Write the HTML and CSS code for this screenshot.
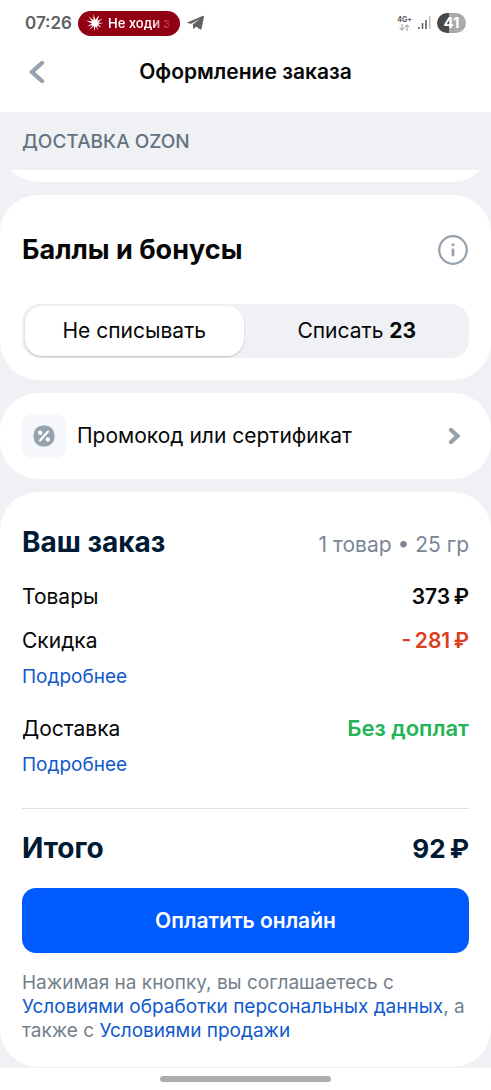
FILE: index.html
```html
<!DOCTYPE html>
<html lang="ru">
<head>
<meta charset="utf-8">
<meta name="viewport" content="width=device-width, initial-scale=1">
<title>Оформление заказа</title>
<link rel="stylesheet" href="styles.css">
</head>
<body>
<div class="status-bar">
  <span class="clock">07:26</span>
  <div class="live-pill">
    <svg width="18" height="18" viewBox="0 0 18 18" aria-hidden="true"><path fill="#fff" d="M7.300 0 9.400 5.800 13.300 1 11.300 6.800 16.500 4.800 12 8.400 17.500 9 12 10 15.500 13.500 10.900 11.500 12.200 16.500 9.600 12.200 8.300 17.500 7.900 11.800 3.500 16 6.600 10.900 .8 12.500 6 9.500 0 6.500 6.300 7.500 2.500 2.500 7.600 6.200Z"/></svg>
    <span class="live-text">Не ходи з</span>
  </div>
  <svg width="18" height="16" viewBox="0 0 18 16" aria-hidden="true"><path fill="#606060" d="M.8 7.300 15.500.900q1.700-.6 1.400 1.200l-2.300 11.400q-.4 1.600-1.800.7L9.200 11.500l-2 2.100q-.9.800-1-.5l-.4-3.700 7.200-5.600-8.700 5L.9 8.300q-1-.5-.1-1Z"/></svg>
  <div class="status-right">
    <div class="network">
      <span>4G+</span>
      <svg width="11" height="7" viewBox="0 0 11 7" aria-hidden="true"><path d="M3 0v6M.6 3.700 3 6.200l2.400-2.500M8 7V1M5.600 3.300 8 .800l2.400 2.500" fill="none" stroke="#999"/></svg>
    </div>
    <svg width="13" height="14" viewBox="0 0 13 14" aria-hidden="true"><path d="M1 11v2M4.500 7v6M8 4v9" stroke="#555" stroke-width="1.500"/><path d="M11.700 0v13" stroke="#bbb" stroke-width="1.500"/></svg>
    <span class="battery">41</span>
  </div>
</div>
<header class="nav">
  <button class="back" type="button" aria-label="Назад">
    <svg width="16" height="24" viewBox="0 0 16 24" aria-hidden="true"><path d="M13 3 3 12l10 9" fill="none" stroke="#96a2ae" stroke-width="4.300" stroke-linecap="round" stroke-linejoin="miter"/></svg>
  </button>
  <h1 class="nav-title">Оформление заказа</h1>
</header>
<main class="content">
  <div class="section-label">ДОСТАВКА OZON</div>
  <div class="scrolled-clip"><div class="scrolled-card"></div></div>

  <section class="card bonus">
    <div class="bonus-head">
      <h2 class="bonus-title">Баллы и бонусы</h2>
      <button class="info" type="button" aria-label="Информация">
        <svg width="32" height="32" viewBox="0 0 32 32" aria-hidden="true"><circle cx="16" cy="16" r="13.800" fill="none" stroke="#96a2ae" stroke-width="2.300"/><circle cx="16" cy="10.700" r="1.500" fill="#96a2ae"/><path d="M16 16v5" stroke="#96a2ae" stroke-width="2.800" stroke-linecap="round"/></svg>
      </button>
    </div>
    <div class="segmented">
      <label class="segment"><input class="segment-input" type="radio" name="points" checked><span class="segment-text">Не списывать</span></label>
      <label class="segment"><input class="segment-input" type="radio" name="points"><span class="segment-text">Списать <b>23</b></span></label>
    </div>
  </section>

  <button class="card promo" type="button">
    <span class="promo-icon">
      <svg width="22" height="22" viewBox="0 0 22 22" aria-hidden="true"><rect x=".5" y=".5" width="21" height="21" rx="9.500" fill="#96a2ae"/><path d="m7 15.500 8-9" stroke="#fff" stroke-width="2.200" stroke-linecap="round"/><circle cx="7.200" cy="7.700" r="2.200" fill="#fff"/><circle cx="14.800" cy="14.500" r="2.200" fill="#fff"/></svg>
    </span>
    <span class="promo-text">Промокод или сертификат</span>
    <svg class="chevron" width="14" height="18" viewBox="0 0 14 18" aria-hidden="true"><path d="m4 3 6.500 6L4 15" fill="none" stroke="#96a2ae" stroke-width="4.300" stroke-linecap="round" stroke-linejoin="miter"/></svg>
  </button>

  <section class="card order">
    <div class="row order-head"><h2 class="order-title">Ваш заказ</h2><span class="order-meta">1 товар • 25 гр</span></div>
    <div class="row line goods"><span>Товары</span><span class="price">373&#8201;₽</span></div>
    <div class="row line"><span>Скидка</span><span class="price discount">-&#8201;281&#8201;₽</span></div>
    <a class="more" href="#">Подробнее</a>
    <div class="row line delivery"><span>Доставка</span><span class="price free">Без доплат</span></div>
    <a class="more" href="#">Подробнее</a>
    <div class="row total"><span class="total-label">Итого</span><span>92&#8201;₽</span></div>
    <button class="pay" type="button">Оплатить онлайн</button>
    <p class="legal">Нажимая на кнопку, вы соглашаетесь с <a href="#">Условиями обработки персональных данных</a>, а также с <a href="#">Условиями продажи</a></p>
  </section>
</main>
<div class="home-area"><div class="home-bar"></div></div>
</body>
</html>
```
FILE: styles.css
```css
* { box-sizing: border-box; }
body {
  margin: 0;
  background: #fff;
  color: #070707;
  font-family: Inter, "Liberation Sans", sans-serif;
  font-size: 21px;
  line-height: 28px;
}
h1, h2, p { margin: 0; }
button { border: 0; padding: 0; background: none; color: inherit; font: inherit; cursor: pointer; }
a { color: #1059cc; text-decoration: none; }
svg { display: block; flex: none; }

.status-bar { display: flex; align-items: center; height: 46px; padding: 0 25px; }
.clock { margin-right: 6px; color: #606060; font-size: 17px; font-weight: 600; }
.live-pill {
  display: flex;
  align-items: center;
  gap: 4px;
  width: 102px;
  height: 25px;
  margin-right: 7px;
  padding: 0 8px;
  border-radius: 13px;
  background: #930014;
}
.live-text {
  flex: 1;
  overflow: hidden;
  background: linear-gradient(90deg, #fff 70%, #930014);
  background-clip: text;
  color: transparent;
  font-size: 13px;
  font-weight: 600;
  line-height: 20px;
  white-space: nowrap;
}
.status-right { display: flex; align-items: center; gap: 6px; margin-left: auto; }
.network { display: flex; flex-direction: column; align-items: center; color: #555; font-size: 7px; font-weight: 700; line-height: 8px; }
.battery {
  width: 29px;
  border-radius: 10px;
  background: linear-gradient(90deg, #484848 41%, #aaa 41%);
  color: #fff;
  font-size: 15px;
  font-weight: 700;
  line-height: 20px;
  text-align: center;
}

.nav { display: grid; grid-template-columns: 44px 1fr 44px; align-items: center; height: 66px; padding: 0 15px 14px; }
.back { display: grid; place-items: center; height: 44px; }
.nav-title { font-size: 21px; font-weight: 600; text-align: center; }

.content { background: #eff1f5; padding-bottom: 1px; }
.section-label { padding: 16px 22px 14px; color: #65727f; font-size: 19px; font-weight: 500; }
.scrolled-clip { display: flex; align-items: flex-end; height: 12px; margin-bottom: 13px; overflow: hidden; }
.scrolled-card { flex: 1; height: 80px; flex-shrink: 0; border-radius: 38px; background: #fff; }
.card { display: block; width: 100%; padding: 0 22px; border-radius: 38px; background: #fff; }
.card + .card { margin-top: 13px; }

.bonus { padding-top: 37px; padding-bottom: 22px; }
.bonus-head { display: flex; align-items: center; justify-content: space-between; height: 36px; }
.bonus-title { font-size: 27px; font-weight: 700; line-height: 36px; }
.segmented { display: grid; grid-template-columns: 1fr 1fr; gap: 4px; margin-top: 36px; padding: 2px 3px; border-radius: 18px; background: #eff1f5; }
.segment { position: relative; display: block; cursor: pointer; }
.segment-input { position: absolute; inset: 0; margin: 0; opacity: 0; }
.segment-text { display: block; padding: 11px 0; border-radius: 17px; text-align: center; }
.segment-input:checked + .segment-text { background: #fff; box-shadow: 0 1px 2px #0003; }

.promo { display: flex; align-items: center; height: 86px; text-align: left; }
.promo-icon { display: grid; place-items: center; width: 44px; height: 44px; margin-right: 11px; border-radius: 11px; background: #f5f7fb; }
.chevron { margin-left: auto; margin-right: 8px; }

.order { padding-top: 32px; padding-bottom: 24px; }
.row { display: flex; align-items: baseline; justify-content: space-between; }
.order-head { line-height: 36px; }
.order-title { color: #001a34; font-size: 28px; font-weight: 700; }
.order-meta { color: #7b8794; }
.line { margin-top: 16px; }
.goods { margin-top: 20px; }
.price { font-weight: 600; }
.discount { color: #dc3f1e; }
.free { color: #22b455; font-size: 22px; }
.more { display: block; width: fit-content; margin-top: 8px; font-size: 19px; }
.delivery { margin-top: 23px; }
.total { margin-top: 29px; padding: 21px 0; border-top: 1px solid #dce0e6; color: #001a34; font-size: 26px; font-weight: 700; line-height: 36px; }
.total-label { font-size: 28px; }
.pay { width: 100%; height: 65px; border-radius: 14px; background: #005bff; color: #fff; font-weight: 600; }
.legal { margin-top: 18px; color: #737f8b; font-size: 19px; line-height: 24px; }

.home-area { display: flex; justify-content: center; height: 21px; padding-top: 8px; }
.home-bar { width: 35%; height: 6px; border-radius: 3px; background: #adadad; }
```
